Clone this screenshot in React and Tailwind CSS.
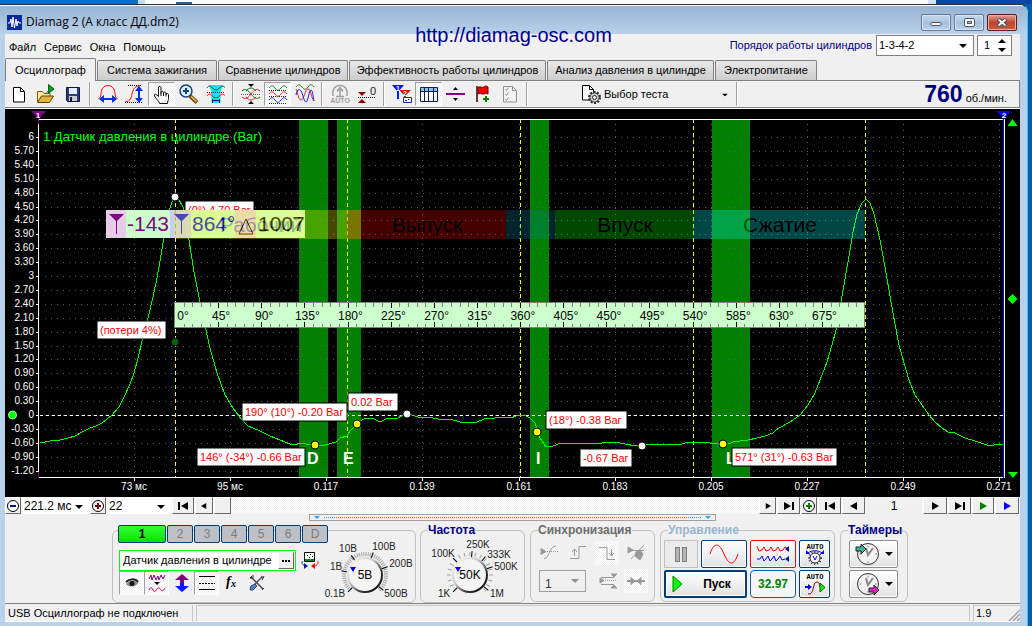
import React from 'react';

const cx = (...parts) => parts.filter(Boolean).join(' ');

const dither = 'bg-[repeating-conic-gradient(#ffffff_0_25%,#f0f0f0_0_50%)] bg-[length:2px_2px]';

/* ---------- toolbar icons ---------- */

const Icon = ({ children, size = 24, box = '0 0 24 24' }) => (
  <svg width={size} height={size} viewBox={box} fill="none" className="shrink-0" aria-hidden="true">
    {children}
  </svg>
);

const NewIcon = () => (
  <Icon>
    <path d="M6.500 5.500h7l4 4v10.500h-11z" fill="#fff" stroke="#000" />
    <path d="M13.500 5.500v4h4" stroke="#000" />
  </Icon>
);

const OpenIcon = () => (
  <Icon>
    <path d="M3.500 20V9.500h5l1.500 2h6V14" fill="#ffe9a0" stroke="#7a5a10" />
    <path d="M3.500 20.500 7.500 14h12l-4 6.500z" fill="#e3b341" stroke="#5b430c" />
    <path d="m14.500 2.500 5.500 4.500-5.500 4.500z" fill="#00a020" stroke="#006010" />
    <path d="M12 12c1-2 2-3 3-4" stroke="#008018" />
  </Icon>
);

const SaveIcon = () => (
  <Icon>
    <path d="M5.500 5.500h13v14h-12l-1-1z" fill="#2c3f7c" stroke="#10183c" />
    <path d="M8 6h8v6H8z" fill="#e8eef8" />
    <path d="M8 14h8v5H8z" fill="#c8ccd8" />
    <path d="M9 15h2v4H9z" fill="#10183c" />
  </Icon>
);

const BellIcon = () => (
  <Icon>
    <path d="M2.500 16.500c2.500 0 2-4 3-7.500C6.500 5.500 8.500 3.500 12 3.500s5.500 2 6.500 5.500c1 3.500.5 7.500 3 7.500" stroke="#f00" />
    <path d="M6 17h12" stroke="#0030e0" strokeWidth="2" />
    <path d="m3 17 5-4v8zM21 17l-5-4v8z" fill="#0030e0" />
  </Icon>
);

const RiseIcon = () => (
  <Icon>
    <path d="M5 3.500h14M2 20.500h17" stroke="#000" strokeDasharray="1 1" />
    <path d="M2 20c6-1 6-4 7-8s2-8 8-8" stroke="#f00" />
    <path d="M16 7v11" stroke="#0030e0" strokeWidth="2" />
    <path d="m16 4 4 5h-8zM16 21l4-5h-8z" fill="#0030e0" />
  </Icon>
);

const HandIcon = () => (
  <Icon>
    <path
      d="M8.500 14.500V5.500c0-1.400 2.500-1.400 2.500 0v6-1c0-1.300 2.500-1.300 2.500 0v1.500-1c0-1.300 2.500-1.300 2.500 0v1.500c0-1.300 2.500-1.300 2.500.2v3.800c0 2-1 2.500-1 5H9.500c0-2-3.500-4.500-5-7.500-.8-1.700 1-2.500 2-1.200z"
      fill="#fff"
      stroke="#111"
    />
    <path d="M11 11v3M13.500 11.500V14M16 12v2.500" stroke="#111" />
  </Icon>
);

const ZoomIcon = () => (
  <Icon>
    <path d="m13 14 7 6.500" stroke="#7a4a10" strokeWidth="4" />
    <path d="m14 14.500 5.500 5" stroke="#f0c060" strokeWidth="1.500" />
    <circle cx="9" cy="9" r="6" fill="#d4f0fa" stroke="#1c3f84" strokeWidth="1.500" />
    <path d="M6 9h6M9 6v6" stroke="#1c3f84" strokeWidth="2" />
  </Icon>
);

const BandIcon = () => (
  <Icon>
    <path d="M5 3h14l-2.500 7v11h-9V10z" fill="#00e8f8" />
    <path d="M3 6c1.500-2.500 3.500-2.500 5.500 0s5 2.500 7 0 4-2 5.500-.5" stroke="#006010" />
    <path d="M3 10.500h18" stroke="#222" strokeDasharray="1 1" />
    <path d="M3 14c1.500-2.500 3.500-2.500 5.500 0s5 2.500 7 0 4-2 5.500-.5" stroke="#f00" />
    <path d="M8 18.500h8M8.500 17v4M15.500 17v4" stroke="#0018a0" />
  </Icon>
);

const CrossIcon = () => (
  <Icon>
    <path d="M3 9c3-3 6-1 9 3s6 6 9 3" stroke="#107018" />
    <path d="M3 15c3 3 6 1 9-3s6-6 9-3" stroke="#e02020" />
    <path d="M2 12.500h20" stroke="#555" strokeDasharray="1 1" />
    <path d="M7 9c3-4 7-4 10 0" stroke="#107018" />
    <path d="M7 15c3 4 7 4 10 0" stroke="#e02020" />
    <path d="M9 2h6l-3 3zM9 22h6l-3-3z" fill="#000" />
  </Icon>
);

const WavesIcon = () => (
  <Icon>
    <path d="M3 6c2-3 4-3 6 0s4 3 6 0 4-3 6 0" stroke="#108020" />
    <path d="M3 8.500h18M3 14.500h18M3 21.500h18" stroke="#222" strokeDasharray="1 1" />
    <path d="M3 12c2-3 4-3 6 0s4 3 6 0 4-3 6 0" stroke="#e02020" />
    <path d="M3 18c2-3 4-3 6 0s4 3 6 0 4-3 6 0" stroke="#1020e0" />
  </Icon>
);

const MixIcon = () => (
  <Icon>
    <path d="M3 5c2-3 4-3 6 0s4 3 6 0 4-3 6 0" stroke="#108020" />
    <path d="M3 7c2 3 2 11 5 11s4-11 7-11 3 9 6 12" stroke="#e02020" />
    <path d="M3 13c1-5 3-7 5-4s3 11 5 11 3-12 5-12 2 8 3 11" stroke="#1020e0" />
  </Icon>
);

const AutoIcon = () => (
  <Icon>
    <path d="M5 14C4 7 7 3.500 12 3.500S20 7 19 14" stroke="#a0a0a0" strokeWidth="1.500" />
    <path d="M12 6.500V14M9 9.500l3-4 3 4M8 14.500h8" stroke="#a0a0a0" strokeWidth="1.500" />
    <text x="12" y="21" textAnchor="middle" fontSize="7" fontWeight="700" fill="#a0a0a0">AUTO</text>
  </Icon>
);

const ZeroIcon = () => (
  <Icon>
    <path d="M3 10h8l-4 4zM3 21h8l-4-4z" fill="#900000" />
    <path d="M3 15.500h18" stroke="#000" strokeDasharray="1 1" />
    <text x="18" y="13" textAnchor="middle" fontSize="11" fill="#222">0</text>
  </Icon>
);

const CursorsIcon = () => (
  <Icon>
    <path d="M2 3h12L9 9v8H7V9z" fill="#0018ff" />
    <path d="M9 8h12l-5 5v7h-2v-7z" fill="#f00000" />
    <text x="8" y="9" textAnchor="middle" fontSize="7" fontWeight="700" fill="#fff">1</text>
    <text x="15" y="14" textAnchor="middle" fontSize="7" fontWeight="700" fill="#fff">2</text>
    <path d="M13.500 15.500h8v5h-8z" fill="#fff" stroke="#1c2f84" />
    <path d="M15 18.500h2M18 17.500h1" stroke="#1c2f84" />
  </Icon>
);

const TableIcon = () => (
  <Icon>
    <path d="M3.500 5.500h17v14h-17z" fill="#fff" stroke="#10204c" />
    <path d="M4 6h16v3H4z" fill="#8cc0f0" />
    <path d="M3 9.500h18M7.500 6v13M11.500 6v13M16.500 6v13" stroke="#10204c" />
  </Icon>
);

const SplitIcon = () => (
  <Icon>
    <path d="M2 12h19" stroke="#800080" strokeWidth="2" />
    <path d="M9 8h5l-2.500-3zM9 16h5l-2.500 3z" fill="#000" />
  </Icon>
);

const FlagIcon = () => (
  <Icon>
    <path d="M6 4v16" stroke="#400000" strokeWidth="1.500" />
    <path d="M7 5.500c2-2 4 1 6-.5s3-1 4 0v7c-2-1-3 0-5 0s-3-1-5 0z" fill="#f00000" stroke="#700000" />
    <path d="M15 14v6M12 17h6" stroke="#008000" strokeWidth="2" />
  </Icon>
);

const ChecklistIcon = () => (
  <Icon>
    <path d="M5.500 4.500h9l4 4v11.500h-13z" fill="#f4f4f4" stroke="#909090" />
    <path d="M14.500 4.500v4h4M7.500 7l1 1.500 2-3M7.500 12l1 1.500 2-3M7.500 17l1 1.500 2-3" stroke="#909090" />
  </Icon>
);

const TestIcon = () => (
  <Icon>
    <path d="M3.500 3.500h7l4 4v10.500h-11z" fill="#fff" stroke="#000" />
    <path d="M10.500 3.500v4h4" stroke="#000" />
    <circle cx="15.500" cy="15.500" r="5.500" stroke="#222" strokeWidth="2" strokeDasharray="2 1.450" />
    <circle cx="15.500" cy="15.500" r="4.500" fill="#c4d4c8" stroke="#444" />
    <circle cx="15.500" cy="15.500" r="2" fill="#fff" stroke="#222" />
  </Icon>
);

/* ---------- small shared controls ---------- */

const ToolButton = ({ label, pressed, disabled, children }) => (
  <button
    type="button"
    aria-label={label}
    disabled={disabled}
    className={cx(
      'flex h-6 w-[27px] shrink-0 items-center justify-center border',
      pressed ? cx('border-[#a0a0a0] border-r-white border-b-white', dither) : 'border-transparent'
    )}
  >
    {children}
  </button>
);

const Separator = () => (
  <div className="flex w-2 shrink-0 justify-center">
    <div className="h-6 w-[2px] border-r border-white bg-[#a0a0a0]" />
  </div>
);

const Arrow = ({ className }) => (
  <svg width="8" height="4" viewBox="0 0 8 4" className={cx('pointer-events-none', className)} aria-hidden="true">
    <path d="M0 0h8L4 4z" fill="currentColor" />
  </svg>
);

const Combo = ({ label, value, className }) => (
  <div className={cx('relative', className)}>
    <select
      aria-label={label}
      defaultValue={value}
      className="h-full w-full appearance-none bg-white pl-[2px] outline-none"
    >
      <option>{value}</option>
    </select>
    <Arrow className="absolute top-1/2 right-[6px] -mt-px" />
  </div>
);

/* ---------- window chrome ---------- */

const chromeButton = 'flex h-[17px] w-[30px] items-center justify-center rounded-xs border';
const plainChrome = 'border-[#5d7896] bg-linear-to-b from-[#c8dbee] via-[#a6c0dc] to-[#b8d0e8] shadow-[inset_0_0_0_1px_#dbe8f4]';

const TitleBar = () => (
  <div className="flex h-7 items-center bg-linear-to-b from-[#98b4d2] to-[#b9d1ea] pr-[10px] pl-[7px] font-['Open_Sans','Noto_Sans',sans-serif] text-xs">
    <svg width="15" height="15" viewBox="0 0 15 15" className="mt-1 shrink-0" aria-hidden="true">
      <rect width="15" height="15" fill="#0a2a94" />
      <path d="M1 8h2l1-4 1 8 1-10 1.500 11L9 4l1 7 1-5 1 2h2" stroke="#fff" fill="none" />
    </svg>
    <span className="mt-1 ml-1 grow">Diamag 2 (А класс ДД.dm2)</span>
    <div className="mt-1 flex gap-[3px]">
      <button type="button" aria-label="Свернуть" className={cx(chromeButton, plainChrome)}>
        <span className="mt-1 h-1 w-3 rounded-xs border border-[#535666] bg-white" />
      </button>
      <button type="button" aria-label="Развернуть" className={cx(chromeButton, plainChrome)}>
        <span className="flex h-[9px] w-[11px] items-center justify-center rounded-xs border border-[#535666] bg-white">
          <span className="h-[3px] w-[5px] border border-[#535666] bg-[#a6c0dc]" />
        </span>
      </button>
      <button type="button" aria-label="Закрыть" className={cx(chromeButton, 'border-[#5c1a14] bg-linear-to-b from-[#e0a096] via-[#c4402c] to-[#cc5a40] shadow-[inset_0_0_0_1px_#e8b0a4]')}>
        <svg width="12" height="9" viewBox="0 0 12 9" aria-hidden="true">
          <path d="m2 1 8 7M10 1 2 8" stroke="#4a4a5a" strokeWidth="4" />
          <path d="m2.500 1.500 7 6M9.500 1.500l-7 6" stroke="#fff" strokeWidth="2" />
        </svg>
      </button>
    </div>
  </div>
);

const MenuRow = () => (
  <div className="flex h-6 items-start justify-between pr-2 pl-1">
    <nav className="flex gap-2 pt-1 text-[11px] leading-[18px]">
      {['Файл', 'Сервис', 'Окна', 'Помощь'].map((item) => (
        <button key={item} type="button">{item}</button>
      ))}
    </nav>
    <div className="flex items-center pt-px text-[11px]">
      <label htmlFor="order" className="mr-1 text-[#000080]">Порядок работы цилиндров</label>
      <div className="relative mr-[3px] h-[21px] w-[98px] border border-[#808080] bg-white">
        <select id="order" defaultValue="1-3-4-2" className="h-full w-full appearance-none pl-[2px] outline-none">
          <option>1-3-4-2</option>
        </select>
        <Arrow className="absolute top-2 right-[6px]" />
      </div>
      <div className="flex h-[21px] w-[35px] items-center border border-[#808080] bg-white">
        <input aria-label="Номер цилиндра" defaultValue="1" className="w-[18px] pl-[6px] outline-none" />
        <div className="flex flex-col gap-[5px] pl-[2px]">
          <button type="button" aria-label="Больше"><Arrow className="block rotate-180" /></button>
          <button type="button" aria-label="Меньше"><Arrow className="block" /></button>
        </div>
      </div>
    </div>
  </div>
);

const tabs = [
  ['Осциллограф', 'w-[91px]'],
  ['Система зажигания', 'w-[120px]'],
  ['Сравнение цилиндров', 'w-[130px]'],
  ['Эффективность работы цилиндров', 'w-[197px]'],
  ['Анализ давления в цилиндре', 'w-[167px]'],
  ['Электропитание', 'w-[102px]'],
];

const Tabs = () => (
  <div role="tablist" className="flex h-[22px] items-end gap-px text-[11px]">
    {tabs.map(([name, width], i) => (
      <button
        key={name}
        type="button"
        role="tab"
        aria-selected={i === 0}
        className={cx(
          'rounded-t-xs border border-b-0 border-[#808080] whitespace-nowrap',
          width,
          i === 0 ? 'z-10 -mb-px h-[23px] bg-[#f0f0f0]' : 'h-5 bg-linear-to-b from-[#e8e8e8] to-[#cdcdcd]'
        )}
      >
        {name}
      </button>
    ))}
  </div>
);

const Toolbar = () => (
  <div className="flex h-7 items-center border border-l-0 border-[#808080]">
    <ToolButton label="Новый"><NewIcon /></ToolButton>
    <ToolButton label="Открыть"><OpenIcon /></ToolButton>
    <ToolButton label="Сохранить"><SaveIcon /></ToolButton>
    <Separator />
    <ToolButton label="Ширина"><BellIcon /></ToolButton>
    <ToolButton label="Высота"><RiseIcon /></ToolButton>
    <ToolButton label="Рука" pressed><HandIcon /></ToolButton>
    <ToolButton label="Увеличить"><ZoomIcon /></ToolButton>
    <ToolButton label="Участок"><BandIcon /></ToolButton>
    <Separator />
    <ToolButton label="Совместить"><CrossIcon /></ToolButton>
    <ToolButton label="Раздельно" pressed><WavesIcon /></ToolButton>
    <ToolButton label="Вместе"><MixIcon /></ToolButton>
    <Separator />
    <ToolButton label="Авто" disabled><AutoIcon /></ToolButton>
    <ToolButton label="Ноль"><ZeroIcon /></ToolButton>
    <Separator />
    <ToolButton label="Курсоры"><CursorsIcon /></ToolButton>
    <ToolButton label="Таблица" pressed><TableIcon /></ToolButton>
    <ToolButton label="Разделить"><SplitIcon /></ToolButton>
    <ToolButton label="Метка"><FlagIcon /></ToolButton>
    <ToolButton label="Список" disabled><ChecklistIcon /></ToolButton>
    <Separator />
    <button type="button" className="flex h-6 w-[202px] shrink-0 items-center gap-px pr-1 pl-12 text-[11px]">
      <TestIcon />
      <span className="grow text-left">Выбор теста</span>
      <Arrow className="mt-px scale-75" />
    </button>
    <Separator />
    <div className="flex grow items-baseline justify-end gap-[3px] pr-3">
      <strong className="text-[23px] leading-6 text-[#000080]">760</strong>
      <span className="text-[11px]">об./мин.</span>
    </div>
  </div>
);

/* ---------- oscilloscope screen ---------- */

const trace = `40,443 50,441 60,440 68,438 75,436 82,432 90,428 96,426 102,423 107,419 112,415 119,407 125,395 130,384 134,373
138,358 142,341 146,327 149,314 153,297 157,278 160,261 163,243 166,226 170,208 173,199 175,196 178,198 183,207 186,221 189,240
194,272 200,302 206,330 210,348 217,373 225,395 233,408 242,420 248,426 260,431 270,436 280,440 290,444 295,445 300,443 306,444
315,445 325,445 336,442 340,438 347,436 350,431 357,424 362,420 366,418 374,419 380,422 388,418 396,419 405,414 412,415 421,418
428,417 438,419 450,419 460,422 477,422 484,419 495,418 503,417 511,418 516,416 524,415 530,418 535,423 540,438 546,447 553,446
561,443 570,444 585,443 598,444 606,442 615,442 625,444 636,446 646,444 682,444 688,442 698,442 710,443 726,445 733,442 748,440
757,438 765,436 773,433 776,430 779,428 790,422 800,415 808,405 815,393 820,380 827,362 832,345 836,330 841,302 845,279 849,256
853,232 857,214 862,203 866,199 870,203 874,214 880,240 885,267 890,296 895,324 899,345 904,363 909,380 915,395 922,405 929,415
935,422 942,428 948,432 955,433 965,438 975,441 984,444 990,446 998,444 1003,445`;

const bands = [[299, 29], [337, 24], [530, 19], [712, 38]];
const xTicks = ['73 мс', '95 мс', '0.117', '0.139', '0.161', '0.183', '0.205', '0.227', '0.249', '0.271'];
const yTicks = Array.from({ length: 25 }, (_, i) => {
  const v = 6 - i * 0.3;
  if (Math.abs(v) < 0.01) return '0';
  return i === 0 || i === 10 ? String(Math.round(v)) : v.toFixed(2);
});
const strokes = [
  ['Рабочий', 175, 186, '#ffff00', 261],
  ['Выпуск', 347, 159, '#ff0000', 427],
  ['', 506, 49, '#0080a0', 0],
  ['Впуск', 555, 139, '#00ff00', 625],
  ['Сжатие', 694, 171, '#00ffff', 780],
];
const notes = [
  ['(0°) 4.70 Bar', 185, 201, 69],
  ['(потери 4%)', 97, 321, 69],
  ['190° (10°) -0.20 Bar', 242, 403, 105],
  ['0.02 Bar', 348, 393, 50],
  ['146° (-34°) -0.66 Bar', 197, 448, 108],
  ['(18°) -0.38 Bar', 546, 411, 81],
  ['-0.67 Bar', 580, 449, 52],
];
const letters = [['D', 307], ['E', 343], ['I', 536], ['L', 726]];
const dots = [
  [175, 197, '#fff'], [175, 342, '#006400'], [315, 445, '#ff0'], [357, 424, '#ff0'],
  [407, 414, '#fff'], [537, 432, '#ff0'], [642, 446, '#fff'], [723, 444, '#ff0'],
];

const Note = ({ text, x, y, w }) => (
  <g>
    <rect x={x} y={y} width={w} height="18" fill="#fff" stroke="#000" />
    <text x={x + 3} y={y + 13} fontSize="11" fill="#f00">{text}</text>
  </g>
);

const Scope = () => (
  <svg viewBox="5 109 1015 388" className="block h-auto w-full bg-black" role="img" aria-label="Осциллограмма">
    <g shapeRendering="crispEdges">
      {bands.map(([x, w]) => <rect key={x} x={x} y="120" width={w} height="357" fill="#008000" />)}
      <g stroke="#5c5c5c" strokeDasharray="1 5">
        {yTicks.map((t, i) => <path key={t} d={`M45 ${Math.round(137 + i * 13.9)}.5H1003`} />)}
        {xTicks.map((t, i) => <path key={t} d={`M${Math.round(134 + i * 96.15)}.5 124V477`} />)}
      </g>
      <path d="M40 415.500H1003" stroke="#fff" strokeDasharray="3 3" />
      {[175, 347, 520, 693, 865].map((x) => (
        <path key={x} d={`M${x}.5 119V477`} stroke="#ff0" strokeDasharray="4 3" />
      ))}
      <path d="M38.500 112V478M38 119.500H1004M38 477.500H1004" stroke="#fff" />
      <path d="M1003.500 119V478" stroke="#00f" />
      <path d="M1004.500 119V478" stroke="#fff" />
      {yTicks.map((t, i) => <path key={t} d={`M36 ${Math.round(137 + i * 13.9)}.5h3`} stroke="#fff" />)}
      {xTicks.map((t, i) => <path key={t} d={`M${Math.round(134 + i * 96.15)}.5 478v3`} stroke="#fff" />)}
      <path d="M38.500 112v12M38.500 472v6" stroke="#800080" />
      <polyline points={trace} fill="none" stroke="#0f0" />
    </g>

    <g fontSize="10" fill="#fff">
      {yTicks.map((t, i) => <text key={t} x="34" y={Math.round(140 + i * 13.9)} textAnchor="end">{t}</text>)}
      {xTicks.map((t, i) => <text key={t} x={Math.round(134 + i * 96.15)} y="490" textAnchor="middle">{t}</text>)}
    </g>
    <text x="43" y="141" fontSize="13" fill="#0f0">1 Датчик давления в цилиндре (Bar)</text>

    <path d="M31 111h15l-7 8z" fill="#800080" />
    <text x="38" y="118" fontSize="8" fontWeight="700" fill="#fff" textAnchor="middle">1</text>
    <path d="M996 111h15l-7 8z" fill="#00f" />
    <text x="1004" y="118" fontSize="8" fontWeight="700" fill="#fff" textAnchor="middle">2</text>
    <path d="m1012.500 119 5 7h-10zM1012.500 294l5 5-5 5-5-5zM1008 472h10l-5 6z" fill="#0f0" />
    <circle cx="12.500" cy="415" r="4" fill="#0f0" stroke="#a0ffa0" />

    {letters.map(([t, x]) => (
      <text key={t} x={x} y="464" fontSize="16" fontWeight="700" fill="#fff">{t}</text>
    ))}
    {notes.map(([t, x, y, w]) => <Note key={t} text={t} x={x} y={y} w={w} />)}
    {dots.map(([x, y, c]) => <circle key={`${x}-${y}`} cx={x} cy={y} r="4" fill={c} stroke="#000" />)}
    <Note text="571° (31°) -0.63 Bar" x={732} y={448} w={105} />

    {/* angle ruler */}
    <g shapeRendering="crispEdges">
      <rect x="174.500" y="302.500" width="690" height="25" fill="#ccffcc" stroke="#808080" />
      {Array.from({ length: 79 }, (_, i) => i + 1).map((i) => {
        const x = Math.round(175 + i * 8.625);
        const major = i % 5 === 0;
        return (
          <path
            key={i}
            d={major ? `M${x}.5 303v5M${x}.5 327v-5` : `M${x}.5 303v4M${x}.5 327v-3`}
            stroke={major ? '#000' : '#808080'}
          />
        );
      })}
    </g>
    {Array.from({ length: 16 }, (_, i) => (
      <text key={i} x={i ? 178 + i * 43.1 : 183} y="320" fontSize="12" textAnchor="middle" fill="#000">{`${i * 45}°`}</text>
    ))}

    {/* cursor readout */}
    <rect x="106" y="210" width="199" height="28" fill="#ccffcc" />
    <rect x="106" y="210" width="20" height="28" fill="#e6cce6" />
    <rect x="170" y="210" width="21" height="28" fill="#ccccff" />
    <rect x="235" y="210" width="21" height="28" fill="#e6cce6" />
    <path d="M109 214h15l-7 7v13h-1v-13z" fill="#800080" />
    <path d="M174 214h15l-7 7v13h-1v-13z" fill="#00f" />
    <path d="m246 219-7 15h14z" fill="none" stroke="#000" />
    <g fontSize="21">
      <text x="127" y="231" fill="#800080">-143</text>
      <text x="192" y="231" fill="#0000e0">864°</text>
      <text x="258" y="231" fill="#000">1007</text>
    </g>
    <path d="M175.500 210v28" stroke="#aaaa00" strokeDasharray="4 3" />

    {/* engine strokes, tinted over everything else */}
    {strokes.map(([t, x, w, c, mid]) => (
      <g key={x} opacity=".28">
        <rect x={x} y="210" width={w} height="29" fill={c} />
        {t && <text x={mid} y="232" fontSize="21" textAnchor="middle" fill="#000">{t}</text>}
      </g>
    ))}
  </svg>
);

/* ---------- scroll strip ---------- */

const StripButton = ({ label, className, children }) => (
  <button
    type="button"
    aria-label={label}
    className={cx(
      'flex h-[17px] shrink-0 items-center justify-center border border-white border-r-[#696969] border-b-[#696969] bg-[#f0f0f0]',
      className
    )}
  >
    {children}
  </button>
);

const Play = ({ back, bar, className }) => (
  <svg width="12" height="8" viewBox="0 0 12 8" className={cx(back && 'rotate-180', className)} aria-hidden="true">
    <path d={bar ? 'M1 0v8l7-4z' : 'M3 0v8l7-4z'} fill="currentColor" />
    {bar && <path d="M9 0h2v8H9z" fill="currentColor" />}
  </svg>
);

const Round = ({ plus, color }) => (
  <svg width="14" height="14" viewBox="0 0 14 14" className="shrink-0" aria-hidden="true">
    <circle cx="7" cy="7" r="5.500" fill="#fff" stroke="#000" />
    <path d={plus ? 'M4 7h6M7 4v6' : 'M4 7h6'} stroke={color} strokeWidth="2" />
  </svg>
);

const ScrollStrip = () => (
  <div className={cx('flex h-[17px] gap-px pr-px text-xs', dither)}>
    <StripButton label="Сжать" className="w-4"><Round color="#000080" /></StripButton>
    <Combo label="Длительность" value="221.2 мс" className="w-[67px]" />
    <StripButton label="Растянуть" className="w-4"><Round plus color="#800000" /></StripButton>
    <Combo label="Деление" value="22" className="w-16" />
    <StripButton label="В начало" className="w-[22px]"><Play back bar /></StripButton>
    <StripButton label="Назад" className="w-[18px]"><Play back className="scale-75" /></StripButton>
    <StripButton label="Ползунок" className="w-[17px]" />
    <div className="grow" />
    <StripButton label="Вперёд" className="w-[17px]"><Play className="scale-75" /></StripButton>
    <StripButton label="В конец" className="w-[23px]"><Play bar /></StripButton>
    <StripButton label="Добавить кадр" className="w-4"><Round plus color="#008000" /></StripButton>
    <StripButton label="Первый кадр" className="w-[23px]"><Play back bar /></StripButton>
    <StripButton label="Предыдущий кадр" className="w-[23px]"><Play back /></StripButton>
    <input aria-label="Кадр" defaultValue="1" className="w-14 bg-[#f0f0f0] text-center outline-none" />
    <StripButton label="Следующий кадр" className="w-6"><Play /></StripButton>
    <StripButton label="Последний кадр" className="w-[23px]"><Play bar /></StripButton>
    <StripButton label="Воспроизвести" className="w-[22px] text-[#008000]"><Play /></StripButton>
    <StripButton label="Воспроизвести всё" className="w-6 text-[#0000ff]"><Play /></StripButton>
  </div>
);

const Splitter = () => (
  <div className="flex justify-center">
    <button type="button" aria-label="Свернуть панель" className="flex h-[7px] w-[407px] items-center gap-1 border border-[#a0a0a0] px-1 text-[#3399ff]">
      <Arrow className="h-[3px] w-[6px]" />
      <span className="h-0 grow border-t border-dotted border-[#3399ff]" />
      <Arrow className="h-[3px] w-[6px]" />
    </button>
  </div>
);

/* ---------- control panel ---------- */

const Knob = ({ value, labels, ticks }) => (
  <svg width="90" height="64" viewBox="-41 -38 90 64" className="shrink-0" role="img" aria-label={value}>
    <defs>
      <linearGradient id="rim" x1="0" y1="0" x2="1" y2="1">
        <stop offset="0" stopColor="#fff" />
        <stop offset=".4" stopColor="#c8c8c8" />
        <stop offset=".7" stopColor="#303030" />
        <stop offset="1" stopColor="#000" />
      </linearGradient>
    </defs>
    {Array.from({ length: ticks + 1 }, (_, i) => (
      <path key={i} d="M19 0h4" stroke="#a0a0a0" transform={`rotate(${-225 + (270 * i) / ticks})`} />
    ))}
    {labels.map(([t, x, y, a]) => (
      <g key={t}>
        <path d="M18 0h6" stroke="#000" transform={`rotate(${a})`} />
        <text x={x} y={y + 4} fontSize="10" textAnchor="middle" fill="#222">{t}</text>
      </g>
    ))}
    <circle r="17" fill="#f4f4f4" stroke="url(#rim)" strokeWidth="2" />
    <path d="M-15-8h6l-3 5z" fill="#00f" />
    <text y="4" fontSize="12" textAnchor="middle" fill="#000">{value}</text>
  </svg>
);

const voltLabels = [
  ['0.1В', -30, 18, 135], ['1В', -29, -9, 190], ['10В', -17, -27, 235],
  ['100В', 19, -29, 290], ['200В', 36, -12, 340], ['500В', 31, 18, 40],
];
const freqLabels = [
  ['1K', -26, 18, 135], ['100K', -27, -22, 225], ['250K', 8, -31, 275],
  ['333K', 29, -21, 310], ['500K', 36, -9, 340], ['1M', 27, 18, 40],
];

const Group = ({ title, titleClass, className, children }) => (
  <fieldset className={cx('min-w-0 shrink-0 rounded-md border border-[#c0c0c0]', className)}>
    <legend className={cx('ml-[7px] text-xs leading-[14px] font-bold', titleClass)}>{title}</legend>
    {children}
  </fieldset>
);

const ChannelIcon = ({ label, pressed, children }) => (
  <button
    type="button"
    aria-label={label}
    className={cx(
      'flex h-6 w-[25px] items-center justify-center border',
      pressed ? cx('border-[#a0a0a0] border-r-white border-b-white', dither) : 'border-transparent'
    )}
  >
    <Icon size={20} box="0 0 20 20">{children}</Icon>
  </button>
);

const ChannelGroup = () => (
  <div className="mt-[7px] flex w-[304px] shrink-0 rounded-md border border-[#c0c0c0] pl-[5px]">
    <div className="w-[206px] shrink-0">
      <div className="-mt-[6px] flex gap-px text-xs">
        <button type="button" className="h-[18px] w-12 shrink-0 rounded-xs border border-[#003c74] bg-linear-to-b from-[#30ff30] to-[#00e000] leading-4 font-bold">1</button>
        {['2', '3', '4', '5', '6', 'D'].map((ch) => (
          <button key={ch} type="button" className="h-[18px] w-[26px] shrink-0 rounded-xs border border-[#003c74] bg-[#bdc0c4] leading-4 text-[#7a7d82]">{ch}</button>
        ))}
      </div>
      <div className="mt-[7px] flex items-center gap-1">
        <div className="ml-px flex h-[21px] w-[177px] shrink-0 items-center border border-[#00ff00] bg-white p-px">
          <input aria-label="Датчик" defaultValue="Датчик давления в цилиндре" className="min-w-0 grow pl-[2px] text-[11px] outline-none" />
          <button type="button" aria-label="Выбрать датчик" className="flex h-[17px] w-4 items-center justify-center gap-px border border-white border-r-[#696969] border-b-[#696969] bg-[#f0f0f0]">
            <span className="size-[2px] bg-black" />
            <span className="size-[2px] bg-black" />
            <span className="size-[2px] bg-black" />
          </button>
        </div>
        <button type="button" aria-label="Поменять каналы">
          <Icon size={20} box="0 0 20 20">
            <path d="M4.500 1.500h10v9h-10z" fill="#fff" stroke="#000" />
            <path d="M5 8h9v2H5z" fill="#208020" />
            <path d="M7 4.500h1M10 3.500h1M12 5.500h1M9 6.500h1" stroke="#000" />
            <path d="M2.500 10c-1.500 2 0 4 3 5" stroke="#0018a0" />
            <path d="m4 12 4 3-4 3z" fill="#0018a0" />
            <path d="M17.500 10c1.500 2 0 4-3 5" stroke="#f00" />
            <path d="m15 12-4 3 4 3z" fill="#f00" />
          </Icon>
        </button>
      </div>
      <div className="ml-px flex h-6 items-center">
        <ChannelIcon label="Показать" pressed>
          <path d="M4 11c3-4 9-5 12-1-2 4-9 5-12 1z" fill="#8a8a8a" />
          <circle cx="10" cy="10.500" r="2.500" fill="#111" />
          <path d="M4 9c3-3 9-4 12 0" stroke="#222" strokeWidth="2" />
        </ChannelIcon>
        <ChannelIcon label="Фильтр" pressed>
          <path d="m2 6 2-4 1 5 2-5 2 5 2-4 1 4 2-5 2 4 2-4" stroke="#800080" />
          <path d="M7 9h6l-3 3z" fill="#000" />
          <path d="M2 17c1-3 3-3 4 0s3 1 4-1 3-1 4 1 3 0 4-2" stroke="#c00060" />
        </ChannelIcon>
        <ChannelIcon label="Смещение">
          <path d="m10 1 7 6h-5v3H8V7H3z" fill="#800080" />
          <path d="m10 19 7-6h-5v-3H8v3H3z" fill="#0018ff" />
        </ChannelIcon>
        <ChannelIcon label="Уровни" pressed>
          <path d="M2 3.500h16M2 16.500h16" stroke="#000" />
          <path d="M2 10.500h16" stroke="#000" strokeDasharray="2 1" />
        </ChannelIcon>
        <ChannelIcon label="Функция">
          <text x="4" y="13" fontFamily="Liberation Serif" fontSize="14" fontStyle="italic" fontWeight="700" fill="#000">f</text>
          <text x="9" y="14" fontFamily="Liberation Serif" fontSize="10" fontStyle="italic" fontWeight="700" fill="#000">x</text>
        </ChannelIcon>
        <ChannelIcon label="Настройка">
          <path d="m4 4 12 12" stroke="#444" strokeWidth="1.500" />
          <path d="m15 4-8 8" stroke="#555" strokeWidth="1.500" />
          <path d="M3 5l2-2M6 2v3H3M14 3l3 2M17 3l-2 4M15 17l2-2" stroke="#333" />
          <path d="m8 11-4 2-1 4 3 0 4-4z" fill="#5080c0" stroke="#284880" />
        </ChannelIcon>
      </div>
    </div>
    <div className="pt-[6px] pb-px"><Knob value="5В" labels={voltLabels} ticks={45} /></div>
  </div>
);

const SyncIcon = ({ label, pressed, children }) => (
  <button
    type="button"
    disabled
    aria-label={label}
    className={cx('flex h-6 w-6 shrink-0 items-center justify-center', pressed && dither)}
  >
    <Icon size={20} box="0 0 20 20">
      <g stroke="#9a9a9a" fill="none">{children}</g>
    </Icon>
  </button>
);

const SyncGroup = () => (
  <Group title="Синхронизация" titleClass="text-[#6d6d6d]" className="w-[125px] pb-2">
    <div className="flex justify-between px-[6px] pt-1">
      <SyncIcon label="Уровень">
        <path d="M6 8.500h13" strokeDasharray="1 1" />
        <path d="M2 5.500v6l5-3z" fill="#9a9a9a" />
        <path d="M5 16c6-1 5-13 12-13" />
      </SyncIcon>
      <SyncIcon label="Фронт">
        <path d="M2 15.500h9v-12h7M6.500 13V6M4 9l2.500-3L9 9" />
      </SyncIcon>
      <SyncIcon label="Спад" pressed>
        <path d="M2 4.500h8v12h8M14.500 6v7M12 10l2.500 3 2.500-3" />
      </SyncIcon>
      <SyncIcon label="Ручной">
        <path d="M2 4v6l5-3zM10 9l4-2 3 4-3 6-5-4z" fill="#9a9a9a" />
        <path d="M5 16 18 2M6 7.500h12" />
      </SyncIcon>
    </div>
    <div className="flex items-center justify-between pt-1 pr-[6px] pl-2">
      <div className="relative h-[22px] w-[47px] border border-[#a0a0a0] text-[#333]">
        <select aria-label="Канал синхронизации" disabled defaultValue="1" className="h-full w-full appearance-none pl-[5px] text-xs outline-none">
          <option>1</option>
        </select>
        <Arrow className="absolute top-2 right-[6px] text-[#909090]" />
      </div>
      <div className="flex gap-1">
        <SyncIcon label="Порог">
          <path d="M2 7v5l4-2.500zM13 3h6l-3 3zM13 17h6l-3-3z" fill="#9a9a9a" />
          <path d="M3 6.500h13M3 13.500h13" />
          <path d="M7 9.500h11" strokeDasharray="1 1" />
        </SyncIcon>
        <SyncIcon label="Сжать" pressed>
          <path d="M5 6.500v7l4-3.500zM15 6.500v7L11 10z" fill="#9a9a9a" />
          <path d="M1 10h18" strokeWidth="2" />
        </SyncIcon>
      </div>
    </div>
  </Group>
);

const bigButton = 'flex h-7 items-center justify-center rounded-xs border bg-linear-to-b from-white to-[#e2e2e2] shadow-[inset_0_0_0_1px_#fff]';

const AutoCaption = () => (
  <text x="13" y="7" textAnchor="middle" fontSize="7" fontFamily="Liberation Mono" fontWeight="700" fill="#000">AUTO</text>
);

const ControlGroup = () => (
  <Group title="Управление" titleClass="text-[#99b4d1]" className="w-[175px] pb-[3px]">
    <div className="grid grid-cols-[34px_46px_46px_31px] gap-x-[3px] gap-y-[2px] pt-[3px] pl-[3px] text-xs font-bold">
      <button type="button" aria-label="Пауза" className="flex h-7 items-center justify-center gap-[2px] border border-[#c0c0c0] bg-[#ebebeb]">
        <span className="h-[15px] w-[5px] border border-[#808080] bg-[#b4b4b4]" />
        <span className="h-[15px] w-[5px] border border-[#808080] bg-[#b4b4b4]" />
      </button>
      <button type="button" aria-label="Синус" className={cx(bigButton, 'border-[#003c74]')}>
        <svg width="30" height="20" viewBox="0 0 30 20" fill="none" aria-hidden="true">
          <path d="M1 10C5-2 10-2 15 10s10 12 14 0" stroke="#f00" />
        </svg>
      </button>
      <button type="button" aria-label="Два канала" className={cx(bigButton, 'border-[#ff0000]')}>
        <svg width="34" height="20" viewBox="0 0 34 20" fill="none" aria-hidden="true">
          <path d="m1 2 2 5 3-1 2-3 2 4 3-1 2-3 2 4 3-1 2-3 2 4 3-1 2-3 2 1" stroke="#f00" />
          <path d="M1 15h3l2-3 2 5 2-2 2-3 2 5 2-2 2-3 2 5 2-2 2-3 2 4 3-1" stroke="#00f" />
          <path d="M33 2v6l-4-3zM33 12v6l-4-3z" fill="#0018a0" />
        </svg>
      </button>
      <button type="button" aria-label="Авто вольты" className={cx(bigButton, 'border-[#003c74]')}>
        <svg width="26" height="24" viewBox="0 0 26 24" fill="none" aria-hidden="true">
          <AutoCaption />
          <path d="M6 11c4-3 10-3 14 0" stroke="#00f" />
          <path d="M4 8v4h4zM22 8v4h-4z" fill="#00f" />
          <circle cx="13" cy="16" r="6" stroke="#333" strokeWidth="2" strokeDasharray="1 2" />
          <circle cx="13" cy="16" r="5" fill="#fff" stroke="#222" />
          <path d="m11 14 2 4 2-4" stroke="#00f" />
        </svg>
      </button>
      <button type="button" className={cx(bigButton, 'col-span-2 gap-5 border-2 border-[#003c74] pr-2')}>
        <svg width="11" height="18" viewBox="0 0 11 18" aria-hidden="true">
          <path d="M1 1v16l9-8z" fill="#0f0" stroke="#008000" />
        </svg>
        Пуск
      </button>
      <button type="button" className="flex h-7 items-center justify-center rounded-sm border border-[#1c5aa0] bg-[#f6f6f6] text-[#008000]">32.97</button>
      <button type="button" aria-label="Авто запуск" className={cx(bigButton, 'border-[#003c74]')}>
        <svg width="26" height="24" viewBox="0 0 26 24" fill="none" aria-hidden="true">
          <AutoCaption />
          <path d="M6 22c7 1 4-12 9-12 3 0 2 4 3 5" stroke="#900000" />
          <path d="m6 12 4 3-4 3zM3 14h3v2H3z" fill="#00f" />
          <path d="M18 11v9l5-4.500z" fill="#0f0" stroke="#006000" />
        </svg>
      </button>
    </div>
  </Group>
);

const ClockButton = ({ label, arrow, out }) => (
  <button type="button" aria-label={label} className={cx(bigButton, 'w-[49px] gap-[5px] border-[#8c8c8c]')}>
    <svg width="26" height="24" viewBox="0 0 26 24" fill="none" aria-hidden="true">
      <circle cx="14" cy="12" r="10.500" fill="#f2f2f2" stroke="#333" />
      <path d="M14 3.500v2M14 19v2M5.500 12h2M21 12h2" stroke="#888" />
      <path d="m12 6 2 7 5-7" stroke="#888" strokeWidth="2" />
      <path
        d={out ? 'M15 16h5v-3l5 5-5 5v-3h-5z' : 'M2 5h5V2l5 5-5 5V9H2z'}
        fill={arrow}
        stroke="#222"
      />
    </svg>
    <Arrow />
  </button>
);

const ControlPanel = () => (
  <div className="flex grow items-start gap-[5px] border-b border-[#808080] pt-[2px] pl-[107px]">
    <ChannelGroup />
    <Group title="Частота" titleClass="text-[#000080]" className="w-[105px] -ml-px pb-px">
      <div className="ml-2"><Knob value="50K" labels={freqLabels} ticks={18} /></div>
    </Group>
    <SyncGroup />
    <ControlGroup />
    <Group title="Таймеры" titleClass="text-[#000080]" className="w-[68px] pb-[3px]">
      <div className="flex flex-col gap-[2px] pt-[3px] pl-2">
        <ClockButton label="Таймер запуска" arrow="#40b0a0" />
        <ClockButton label="Таймер остановки" arrow="#e020c0" out />
      </div>
    </Group>
  </div>
);

const StatusBar = () => (
  <div className="flex h-[18px] gap-[3px] pt-px text-[11px] leading-[16px]">
    <div className="w-[188px] border-r border-b border-white border-r-[#c8c8c8] pl-[3px] whitespace-nowrap">USB Осциллограф не подключен</div>
    <div className="grow border border-[#c8c8c8] border-b-white" />
    <div className="flex w-[47px] items-end justify-between border border-[#c8c8c8] border-r-0 border-b-white pl-[2px]">
      <span>1.9</span>
      <svg width="12" height="12" viewBox="0 0 12 12" aria-hidden="true">
        <path d="M1 12 12 1M5 12l7-7M9 12l3-3" stroke="#a0a0a0" strokeWidth="1.500" />
      </svg>
    </div>
  </div>
);

export default function App() {
  return (
    <div className="flex min-h-screen flex-col bg-[#0a58a8] font-['Liberation_Sans',Arial,sans-serif] text-black">
      <div className="flex h-1 shrink-0">
        <div className="w-[138px] bg-[#0a6ecc]" />
        <div className="w-[7px] bg-[#c8dcf0]" />
        <div className="grow bg-[#f8fafc]">
          <div className="mt-[2px] ml-[31px] h-[2px] w-4 bg-[#305a9c]" />
        </div>
        <div className="w-2 bg-[#d4e2f2]" />
        <div className="w-24 bg-[#0848a0]" />
      </div>

      <div className="relative mr-1 flex grow flex-col overflow-hidden rounded-tr-lg border-t border-r border-t-[#2a2f36] border-r-[#30d0f8] bg-[#b9d1ea] pb-[5px]">
        <div className="h-px bg-white" />
        <TitleBar />
        <div className="mr-[7px] ml-[5px] flex grow flex-col bg-[#f0f0f0]">
          <MenuRow />
          <Tabs />
          <Toolbar />
          <div className="border-t border-white"><Scope /></div>
          <ScrollStrip />
          <Splitter />
          <ControlPanel />
          <StatusBar />
        </div>
        <a href="http://diamag-osc.com" className="absolute top-[18px] left-1/2 -translate-x-1/2 text-xl leading-6 text-[#000090]">
          http://diamag-osc.com
        </a>
      </div>
    </div>
  );
}
